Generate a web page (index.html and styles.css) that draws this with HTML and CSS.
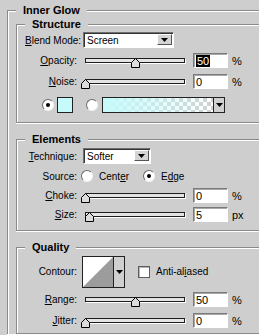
FILE: index.html
```html
<!DOCTYPE html>
<html lang="en">
    <head>
        <meta charset="UTF-8">
        <meta name="viewport" content="width=device-width, initial-scale=1.0">
        <title>Inner Glow</title>
        <link rel="stylesheet" href="styles.css">
    </head>
    <body>
        <fieldset class="panel">
            <legend class="title">Inner Glow</legend>

            <fieldset class="group structure">
                <legend class="title">Structure</legend>
                <div class="row">
                    <label class="label"><u>B</u>lend Mode:</label>
                    <div class="select blend">
                        <span class="select-value">Screen</span>
                        <span class="select-btn"><svg width="7" height="4" viewBox="0 0 7 4"><polygon points="0,0 7,0 3.5,4" fill="#000"/></svg></span>
                    </div>
                </div>
                <div class="row slim r-opacity">
                    <label class="label"><u>O</u>pacity:</label>
                    <div class="slider">
                        <div class="track"></div>
                        <svg class="thumb" style="left:50%" width="9" height="10" viewBox="0 0 9 10"><polygon points="0.5,4.5 4.5,0.5 8.5,4.5 8.5,9.5 0.5,9.5" fill="#dcdcdc" stroke="#000"/></svg>
                    </div>
                    <div class="field"><span class="picked">50</span></div>
                    <span class="unit">%</span>
                </div>
                <div class="row slim r-noise">
                    <label class="label"><u>N</u>oise:</label>
                    <div class="slider">
                        <div class="track"></div>
                        <svg class="thumb" style="left:0%" width="9" height="10" viewBox="0 0 9 10"><polygon points="0.5,4.5 4.5,0.5 8.5,4.5 8.5,9.5 0.5,9.5" fill="#dcdcdc" stroke="#000"/></svg>
                    </div>
                    <div class="field">0</div>
                    <span class="unit">%</span>
                </div>
                <div class="row r-color">
                    <span class="radio on"></span>
                    <span class="swatch"></span>
                    <span class="radio second"></span>
                    <div class="gradient">
                        <span class="gradient-fill"></span>
                        <span class="gradient-btn"><svg width="7" height="4" viewBox="0 0 7 4"><polygon points="0,0 7,0 3.5,4" fill="#000"/></svg></span>
                    </div>
                </div>
            </fieldset>

            <fieldset class="group elements">
                <legend class="title">Elements</legend>
                <div class="row">
                    <label class="label"><u>T</u>echnique:</label>
                    <div class="select technique">
                        <span class="select-value">Softer</span>
                        <span class="select-btn"><svg width="7" height="4" viewBox="0 0 7 4"><polygon points="0,0 7,0 3.5,4" fill="#000"/></svg></span>
                    </div>
                </div>
                <div class="row r-source">
                    <span class="label">Source:</span>
                    <span class="radio src"></span>
                    <span class="option">Cent<u>e</u>r</span>
                    <span class="radio on edge"></span>
                    <span class="option">E<u>d</u>ge</span>
                </div>
                <div class="row slim r-choke">
                    <label class="label"><u>C</u>hoke:</label>
                    <div class="slider">
                        <div class="track"></div>
                        <svg class="thumb" style="left:0%" width="9" height="10" viewBox="0 0 9 10"><polygon points="0.5,4.5 4.5,0.5 8.5,4.5 8.5,9.5 0.5,9.5" fill="#dcdcdc" stroke="#000"/></svg>
                    </div>
                    <div class="field">0</div>
                    <span class="unit">%</span>
                </div>
                <div class="row slim r-size">
                    <label class="label"><u>S</u>ize:</label>
                    <div class="slider">
                        <div class="track"></div>
                        <svg class="thumb" style="left:4%" width="9" height="10" viewBox="0 0 9 10"><polygon points="0.5,4.5 4.5,0.5 8.5,4.5 8.5,9.5 0.5,9.5" fill="#dcdcdc" stroke="#000"/></svg>
                    </div>
                    <div class="field">5</div>
                    <span class="unit">px</span>
                </div>
            </fieldset>

            <fieldset class="group quality">
                <legend class="title">Quality</legend>
                <div class="row r-contour">
                    <span class="label">Contour:</span>
                    <div class="contour">
                        <svg class="contour-curve" width="30" height="30" viewBox="0 0 30 30">
                            <rect width="30" height="30" fill="#fff"/>
                            <polygon points="0,30 30,0 30,30" fill="#9c9c9c"/>
                        </svg>
                        <span class="contour-btn"><svg width="7" height="4" viewBox="0 0 7 4"><polygon points="0,0 7,0 3.5,4" fill="#000"/></svg></span>
                    </div>
                    <span class="check"></span>
                    <span class="option">Anti-al<u>i</u>ased</span>
                </div>
                <div class="row slim r-range">
                    <label class="label"><u>R</u>ange:</label>
                    <div class="slider">
                        <div class="track"></div>
                        <svg class="thumb" style="left:50%" width="9" height="10" viewBox="0 0 9 10"><polygon points="0.5,4.5 4.5,0.5 8.5,4.5 8.5,9.5 0.5,9.5" fill="#dcdcdc" stroke="#000"/></svg>
                    </div>
                    <div class="field">50</div>
                    <span class="unit">%</span>
                </div>
                <div class="row slim r-jitter">
                    <label class="label"><u>J</u>itter:</label>
                    <div class="slider">
                        <div class="track"></div>
                        <svg class="thumb" style="left:0%" width="9" height="10" viewBox="0 0 9 10"><polygon points="0.5,4.5 4.5,0.5 8.5,4.5 8.5,9.5 0.5,9.5" fill="#dcdcdc" stroke="#000"/></svg>
                    </div>
                    <div class="field">0</div>
                    <span class="unit">%</span>
                </div>
            </fieldset>
        </fieldset>
    </body>
</html>
```

FILE: styles.css
```css
html, body {
margin: 0;
padding: 0;
overflow: hidden;
}

body {
width: 259px;
height: 335px;
background-color: #cecece;
color: #000;
font-family: "Liberation Sans", Arial, sans-serif;
font-size: 10px;
}

/* Group boxes - right and bottom edges run off the window */
fieldset {
margin: 0;
min-width: 0;
border: 1px solid #8a8a8a;
border-right: 0;
box-shadow: inset 1px 1px 0 #fff, 0 1px 0 #fff;
}

.panel {
width: 252px;
box-sizing: border-box;
margin: 4px 0 0 7px;
padding: 1px 0 0 8px;
border-bottom: 0;
}

.group {
padding: 0 0 0 8px;
}

.title {
padding: 0 7px;
margin: 0;
font-weight: bold;
font-size: 11px;
line-height: 13px;
background-color: #cecece;
}

.structure {
padding-top: 1px;
padding-bottom: 9px;
}

.elements {
margin-top: 10px;
padding-top: 2px;
padding-bottom: 8px;
}

.quality {
margin-top: 10px;
padding-top: 2px;
padding-bottom: 5px;
}

/* Rows */
.row {
display: flex;
align-items: center;
height: 16px;
}

.row.slim {
height: 15px;
}

.r-opacity { margin-top: 5px; }
.r-noise { margin-top: 6px; }
.r-color { margin-top: 8px; }
.r-source { margin-top: 4px; }
.r-choke { margin-top: 4px; }
.r-size { margin-top: 4px; }
.r-contour { height: 31px; }
.r-range { margin-top: 5px; }
.r-jitter { margin-top: 6px; }

.label {
width: 52px;
flex: none;
text-align: right;
white-space: nowrap;
}

.option {
margin-left: 6px;
white-space: nowrap;
}

.unit {
margin-left: 4px;
font-size: 11px;
}

/* Select boxes */
.select {
display: flex;
height: 16px;
margin-left: 6px;
box-sizing: border-box;
border: 1px solid;
border-color: #6f6f6f #fff #fff #6f6f6f;
background-color: #fff;
box-shadow: inset 1px 1px 0 #333;
}

.blend { width: 91px; }
.technique { width: 68px; }

.select-value {
flex: 1;
padding: 1px 0 0 3px;
line-height: 13px;
}

.select-btn {
width: 15px;
display: flex;
align-items: center;
justify-content: center;
margin: 1px 1px 2px 0;
background-color: #d4d4d4;
border: 1px solid;
border-color: #fff #555 #555 #fff;
box-sizing: border-box;
}

/* Sliders */
.slider {
position: relative;
width: 100px;
align-self: stretch;
margin-left: 8px;
}

.track {
height: 3px;
margin-top: 5px;
border: 1px solid #1e1e1e;
background-color: #e4e4e4;
box-shadow: 1px 1px 0 #fff;
}

.thumb {
position: absolute;
top: 5px;
margin-left: -4px;
}

.field {
width: 35px;
height: 15px;
margin-left: 8px;
box-sizing: border-box;
padding: 1px 0 0 2px;
border: 1px solid;
border-color: #7a7a7a #fff #fff #7a7a7a;
background-color: #fff;
box-shadow: inset 1px 1px 0 #a8a8a8;
font-size: 11px;
line-height: 12px;
}

.picked {
background-color: #000;
color: #fff;
padding: 0 1px;
}

/* Radios and checkbox */
.radio {
width: 12px;
height: 12px;
flex: none;
box-sizing: border-box;
border-radius: 50%;
border: 1px solid;
border-color: #6a6a6a #f4f4f4 #f4f4f4 #6a6a6a;
background-color: #fff;
display: flex;
align-items: center;
justify-content: center;
}

.radio.on::after {
content: "";
width: 4px;
height: 4px;
border-radius: 50%;
background-color: #000;
}

.r-color .radio.on { margin-left: 17px; }
.radio.second { margin-left: 13px; }
.radio.src { margin-left: 4px; }
.radio.edge { margin-left: 14px; }

.check {
width: 12px;
height: 12px;
margin-left: 13px;
box-sizing: border-box;
border: 1px solid #5e5e5e;
background-color: #fff;
box-shadow: inset 1px 1px 0 #b4b4b4;
}

/* Colour swatch and gradient */
.swatch {
width: 16px;
height: 16px;
margin-left: 3px;
box-sizing: border-box;
border: 1px solid #222;
background-color: #c6fafb;
}

.gradient {
display: flex;
width: 123px;
height: 16px;
margin-left: 4px;
box-sizing: border-box;
border: 1px solid #222;
}

.gradient-fill {
flex: 1;
background:
    linear-gradient(to right, #c6fafb 0%, rgba(198, 250, 251, 0.6) 45%, rgba(198, 250, 251, 0) 100%),
    repeating-conic-gradient(#d0d0d0 0 25%, #fff 0 50%) 0 0 / 8px 8px;
}

.gradient-btn {
width: 10px;
display: flex;
align-items: center;
justify-content: center;
border-left: 1px solid #222;
background-color: #d0d0d0;
}

/* Contour picker */
.contour {
display: flex;
height: 32px;
margin-left: 5px;
box-sizing: border-box;
border: 1px solid #222;
}

.contour-curve {
display: block;
}

.contour-btn {
width: 10px;
display: flex;
align-items: center;
justify-content: center;
border-left: 1px solid #222;
background-color: #d0d0d0;
}
```
